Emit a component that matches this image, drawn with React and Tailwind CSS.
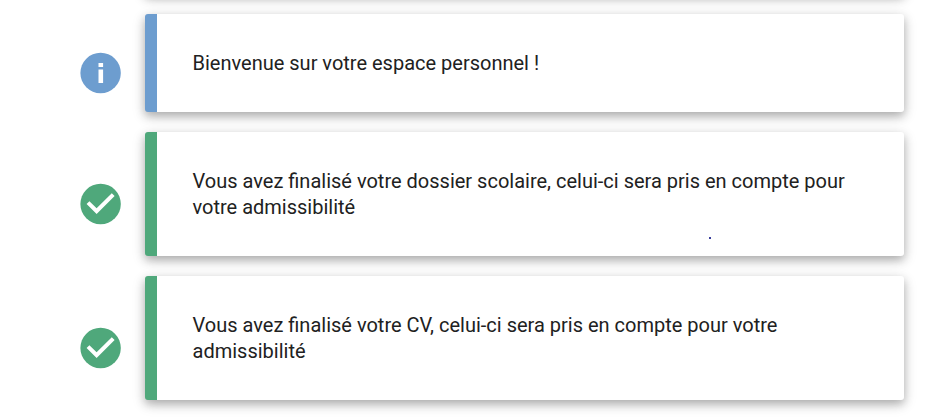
const notifications = [
  { type: 'info', text: 'Bienvenue sur votre espace personnel !' },
  {
    type: 'success',
    text: 'Vous avez finalisé votre dossier scolaire, celui-ci sera pris en compte pour votre admissibilité',
    dot: true,
  },
  {
    type: 'success',
    text: 'Vous avez finalisé votre CV, celui-ci sera pris en compte pour votre admissibilité',
  },
]

const shadow = 'shadow-[0_4px_10px_0_rgba(0,0,0,0.26),0_4px_15px_0_rgba(0,0,0,0.12)]'

function StatusIcon({ info }) {
  return (
    <svg
      viewBox="0.2 0 24 24"
      fill="currentColor"
      className={`size-12 ${info ? 'text-[#6d9dcf]' : 'text-[#4fa87b]'}`}
    >
      <circle cx="12" cy="12" r="10.1" />
      {info ? (
        <path d="M10.95 7h2.3v2h-2.3zM10.95 10.2h2.3V17h-2.3z" fill="#fff" />
      ) : (
        <path d="M10 17l-5-5 1.41-1.41L10 14.17l7.59-7.59L19 8z" fill="#fff" />
      )}
    </svg>
  )
}

function Notification({ type, text, dot }) {
  const info = type === 'info'

  return (
    <div className="flex items-center">
      <div className="w-[68px] shrink-0 pt-5">
        <StatusIcon info={info} />
      </div>
      <div
        className={`relative w-[759px] rounded-[3px] border-l-12 bg-white p-9 ${shadow} ${
          info ? 'border-[#6d9dcf]' : 'border-[#4fa87b]'
        }`}
      >
        <p className="text-[20px] leading-[26px] text-[#212121]">{text}</p>
        {dot && <span className="absolute top-[105px] left-[552px] size-0.5 bg-[#3a3f9c]" />}
      </div>
    </div>
  )
}

export default function App() {
  return (
    <div className="h-[417px] overflow-hidden bg-white font-['Roboto',sans-serif]">
      <div className="-mt-[104px] flex flex-col gap-5 pl-[76.5px]">
        {/* end of the previous card, scrolled out */}
        <div className={`ml-[68px] h-[98px] w-[759px] rounded-[3px] bg-white ${shadow}`} />
        {notifications.map((n) => (
          <Notification key={n.text} {...n} />
        ))}
      </div>
    </div>
  )
}
